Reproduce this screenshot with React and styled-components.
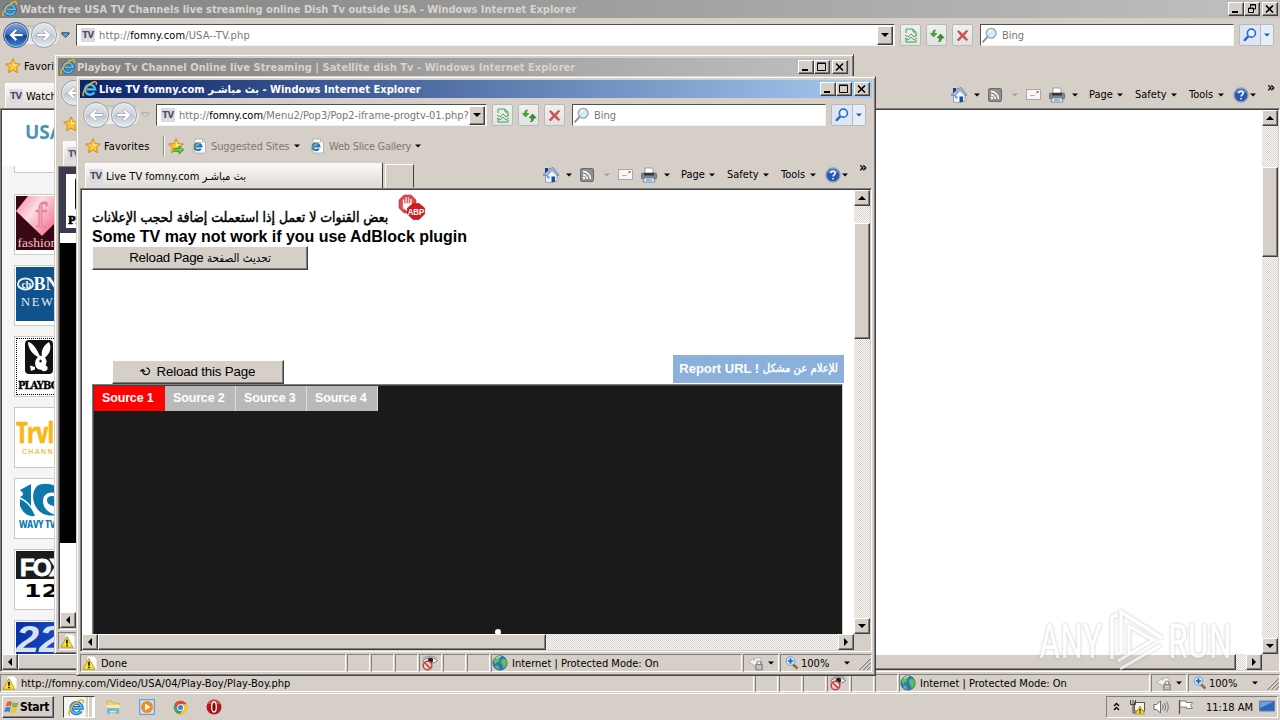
import React from 'react';
import styled, { createGlobalStyle, css } from 'styled-components';

const face = '#d5cfc7';
const ui = '"DejaVu Sans Condensed", "DejaVu Sans", sans-serif';

const GlobalStyle = createGlobalStyle`
  * { box-sizing: border-box; }
  body { margin: 0; overflow: hidden; }
  svg { display: block; flex: none; }
`;

const raised = css`
  background: ${face};
  border: 1px solid;
  border-color: #fff #404040 #404040 #fff;
  box-shadow: inset -1px -1px 0 #808080;
`;

const Desktop = styled.div`
  position: relative;
  width: 1280px;
  height: 720px;
  overflow: hidden;
  background: ${face};
  font: 11px/14px ${ui};
  font-stretch: condensed;
  color: #000;
  white-space: pre;
`;

/* ---------- window ---------- */

const WindowBox = styled.div`
  position: absolute;
  left: ${p => p.$x}px;
  top: ${p => p.$y}px;
  width: ${p => p.$w}px;
  height: ${p => p.$h}px;
  background: ${face};
  display: flex;
  flex-direction: column;
  ${p => !p.$maximized && css`
    padding: 3px;
    border: 1px solid;
    border-color: ${face} #404040 #404040 ${face};
    box-shadow: inset 1px 1px 0 #fff, inset -1px -1px 0 #808080;
  `}
`;

const TitleBar = styled.div`
  height: 18px;
  flex: none;
  display: flex;
  align-items: center;
  padding: 0 2px;
  background: ${p => p.$active
    ? 'linear-gradient(90deg, #0a246a, #a6caf0)'
    : 'linear-gradient(90deg, #808080, #c0c0c0)'};
  color: ${p => p.$active ? '#fff' : '#d8d4cc'};
`;

const TitleText = styled.div`
  flex: 1;
  font-weight: bold;
  margin-left: ${p => p.$ml}px;
  padding-top: 2px;
  letter-spacing: ${p => p.$track || 0}px;
  overflow: hidden;
`;

const CaptionButton = styled.div`
  ${raised}
  width: 16px;
  height: 14px;
  margin-left: ${p => p.$gap ? 2 : 0}px;
  display: flex;
  align-items: center;
  justify-content: center;
`;

const NavRow = styled.div`
  height: 34px;
  flex: none;
  display: flex;
  align-items: center;
  padding: 0 6px 0 3px;
`;

const Field = styled.div`
  height: 22px;
  flex: ${p => p.$w ? 'none' : 1};
  width: ${p => p.$w ? p.$w + 'px' : 'auto'};
  display: flex;
  align-items: center;
  background: #fff;
  border: 1px solid;
  border-color: #505050 #f4f2ee #f4f2ee #505050;
  color: #777;
  overflow: hidden;
  margin-left: ${p => p.$ml || 0}px;
`;

const FieldText = styled.div`
  flex: 1;
  overflow: hidden;
  padding-top: 2px;
  letter-spacing: ${p => p.$track || 0}px;
  margin-left: ${p => p.$ml}px;
  b { color: #000; font-weight: normal; }
`;

const DropButton = styled.div`
  ${raised}
  width: 16px;
  height: 19px;
  margin-right: 1px;
  display: flex;
  align-items: center;
  justify-content: center;
`;

const ToolButton = styled.div`
  width: 21px;
  height: 22px;
  margin-left: 5px;
  display: flex;
  align-items: center;
  justify-content: center;
  border: 1px solid #b4bac4;
  border-radius: 2px;
  background: linear-gradient(#f1f0ee, #e2e2e3);
`;

const SearchButton = styled(ToolButton)`
  width: 35px;
  justify-content: space-around;
  background: linear-gradient(90deg, #dfe6f1 20px, #b4bac4 20px, #b4bac4 21px, #e6edf6 21px);
`;

const Round = styled.div`
  width: 26px;
  height: 26px;
  border-radius: 50%;
  margin-right: 2px;
  border: 1px solid ${p => p.$on ? '#40587e' : '#979da2'};
  box-shadow: inset 0 0 0 1px ${p => p.$on ? '#b9d2f2' : '#f3f6f8'};
  background: ${p => p.$on
    ? 'linear-gradient(#7da3d8, #3e6cbc 48%, #16408f 52%, #3d86dc)'
    : 'linear-gradient(#e4e7eb, #ced5db 48%, #bcc7d1 52%, #e3eef4)'};
  display: flex;
  align-items: center;
  justify-content: center;
`;

const RoundPair = styled.div`
  display: flex;
  margin-right: 2px;
  border-radius: 13px;
  background: linear-gradient(transparent 3px, #bdb8b1 3px, #e2dfda 8px, #f0eeeb 22px, transparent 22px);
`;

const FavRow = styled.div`
  height: 28px;
  flex: none;
  display: flex;
  align-items: center;
  padding-left: 5px;
  color: #7c7a76;
`;

const FavText = styled.div`
  width: ${p => p.$w}px;
  color: ${p => p.$dark ? '#000' : 'inherit'};
  letter-spacing: ${p => p.$track || 0}px;
  margin: 0 4px 0 ${p => p.$ml || 0}px;
  padding-top: 2px;
`;

const FavDivider = styled.div`
  width: 2px;
  height: 20px;
  border-left: 1px solid #8c8983;
  border-right: 1px solid #fff;
  margin: 0 3px 0 9px;
`;

const TabRow = styled.div`
  height: 28px;
  flex: none;
  display: flex;
  padding: 3px 4px 0 5px;
`;

const Tab = styled.div`
  width: ${p => p.$w}px;
  height: 25px;
  display: flex;
  align-items: center;
  padding-left: 3px;
  background: linear-gradient(#fbfaf9, #dedad4);
  border-left: 1px solid #fff;
  border-right: 1px solid #404040;
  overflow: hidden;
`;

const NewTab = styled.div`
  width: 29px;
  height: 24px;
  margin: 1px 0 0 2px;
  border: 1px solid;
  border-color: #fff #404040 transparent #fff;
`;

const TabLabel = styled.div`
  margin-left: 3px;
  padding-top: 2px;
`;

const CommandBar = styled.div`
  margin-left: auto;
  display: flex;
  align-items: center;
  height: 23px;
`;

const Cmd = styled.div`
  flex: none;
  margin-left: ${p => p.$ml || 0}px;
  width: ${p => p.$w}px;
  align-self: ${p => p.$top ? 'flex-start' : 'center'};
  font-size: ${p => p.$top ? 14 : 11}px;
  font-weight: ${p => p.$top ? 'bold' : 'normal'};
  line-height: ${p => p.$top ? 8 : 14}px;
`;

const TvBox = styled.div`
  width: 14px;
  height: 14px;
  flex: none;
  margin-left: ${p => p.$ml || 0}px;
  background: #dbdadf;
  color: #4d4d62;
  font-weight: bold;
  font-size: 9.500px;
  line-height: 14px;
  letter-spacing: -0.4px;
  text-align: center;
`;

const Frame = styled.div`
  flex: 1;
  min-height: 0;
  display: grid;
  grid-template-columns: 1fr 16px;
  grid-template-rows: 1fr 16px;
  border: 1px solid;
  border-color: #808080 #fff #fff #808080;
  box-shadow: inset 1px 1px 0 #404040;
  padding: 1px;
`;

const Page = styled.div`
  min-width: 0;
  min-height: 0;
  overflow: hidden;
  background: #fff;
`;

const Track = styled.div`
  display: flex;
  flex-direction: ${p => p.$vertical ? 'column' : 'row'};
  background: repeating-conic-gradient(#fff 0 25%, ${face} 0 50%) 0 0 / 2px 2px;
`;

const ScrollButton = styled.div`
  ${raised}
  width: 16px;
  height: 16px;
  flex: none;
  display: flex;
  align-items: center;
  justify-content: center;
`;

const Thumb = styled.div`
  ${raised}
  flex: none;
  ${p => p.$vertical ? `height: ${p.$size}px; margin-top: ${p.$at}px;` : `width: ${p.$size}px; margin-left: ${p.$at}px;`}
  & + * { margin-${p => p.$vertical ? 'top' : 'left'}: auto; }
`;

const StatusBar = styled.div`
  height: 20px;
  flex: none;
  display: flex;
  gap: 1px;
  padding-top: 2px;
`;

const Cell = styled.div`
  height: 18px;
  flex: ${p => p.$w ? 'none' : 1};
  width: ${p => p.$w ? p.$w + 'px' : 'auto'};
  border: 1px solid;
  border-color: #85827d #fff #fff #85827d;
  display: flex;
  align-items: center;
  padding-left: ${p => p.$pad || 0}px;
  gap: ${p => p.$gap || 0}px;
  overflow: hidden;
`;

const CellText = styled.div`
  padding-top: 2px;
  width: ${p => p.$w ? p.$w + 'px' : 'auto'};
  letter-spacing: ${p => p.$track || 0}px;
`;

/* ---------- icons ---------- */

const Arrow = ({ color = '#000', dir = 'down', size = 6 }) => {
  const turn = { down: 0, up: 180, left: 90, right: -90 }[dir];
  return (
    <svg width={size} height={size} viewBox="0 0 8 8">
      <path d="M0 2h8L4 6z" fill={color} transform={`rotate(${turn} 4 4)`} />
    </svg>
  );
};

const IeIcon = ({ size = 16 }) => (
  <svg width={size} height={size} viewBox="0 0 16 16">
    <path d="M12.3 11.2A5 5 0 1 1 13 8.4H4.6" fill="none" stroke="#1464b4" strokeWidth="3.400" />
    <path d="M12.3 11.2A5 5 0 1 1 13 8.4H4.6" fill="none" stroke="#5cc0f4" strokeWidth="1.700" />
    <path d="M1.8 15.2C-.8 13 3.500 5.600 9.500 2c4-2.300 6-1.200 4.500 1.800" fill="none" stroke="#e9b320" strokeWidth="1.500" />
  </svg>
);

const Star = ({ size = 16, add }) => (
  <svg width={size} height={size} viewBox="0 0 16 16">
    <path d="M8 .8l2.200 4.800 5.200.5-3.900 3.500 1.200 5.200L8 12.100l-4.700 2.700 1.200-5.200L.6 6.100l5.200-.5z" fill="#fdc52e" stroke="#cd8310" strokeWidth=".9" />
    <path d="M8 3l1.300 3.300 3.200.5-4.500 2z" fill="#fff0a8" />
    {add && <path d="M6 10.500h5V8l4.700 3.900L11 15.700v-2.500H6z" fill="#6fd04c" stroke="#218a1d" strokeWidth=".8" />}
  </svg>
);

const IePage = () => (
  <svg width="14" height="16" viewBox="0 0 14 16">
    <path d="M3 1h7.500L13.500 4v11H3z" fill="#fff" stroke="#a5a9ae" strokeWidth=".8" />
    <path d="M10.500 1v3h3" fill="none" stroke="#a5a9ae" strokeWidth=".8" />
    <path d="M8.800 10.700A3.400 3.400 0 1 1 9.400 8.400H3" fill="none" stroke="#1d78c8" strokeWidth="2.200" />
    <path d="M.8 13.500C-.2 11 4 6.200 9.800 3.900" fill="none" stroke="#e3b33a" />
  </svg>
);

const NavArrow = ({ flip, on }) => (
  <svg width="18" height="18" viewBox="0 0 18 18">
    <path d="M2 9l6.500-6.200 2 1.900L7.700 7.500H16v3H7.700l2.800 2.800-2 1.900z" fill="#fff" stroke={on ? '#2a56a0' : '#98a6b4'} strokeWidth=".8" transform={flip ? 'matrix(-1 0 0 1 18 0)' : undefined} />
  </svg>
);

const RecentArrow = ({ on }) => (
  <svg width="9" height="6" viewBox="0 0 9 6">
    <path d="M.8 .8h7.400v1L4.500 5.300.8 1.800z" fill={on ? '#5aa0d8' : '#d8d4cd'} stroke={on ? '#143a5c' : '#aaa69f'} strokeWidth=".9" />
  </svg>
);

const Compat = () => (
  <svg width="14" height="15" viewBox="0 0 14 15">
    <path d="M2 5V1h7l3 3v4M2 10v4h10v-2M9 1v3h3" fill="none" stroke="#49a34f" />
    <path d="M1 7l3 2 3-3 3 3 3-2M1 10l3 2 3-3 3 3 3-2" fill="none" stroke="#3b9f45" strokeWidth=".9" />
  </svg>
);

const Refresh = () => (
  <svg width="16" height="15" viewBox="0 0 16 15">
    <path d="M6.800 2C4.800 1.500 3.500 3 3.600 5.500H1.200l3.400 3.600L8 5.500H5.500c0-1.500.3-2.500 1.300-3.500z" fill="#48a82f" stroke="#227b18" strokeWidth=".5" />
    <path d="M9.300 13.700c2.200.2 3.500-1.300 3.400-3.700h2.500L11.600 6 8 10h2.700c.1 1.500-.2 2.700-1.400 3.700z" fill="#339328" stroke="#206b18" strokeWidth=".5" />
  </svg>
);

const Stop = () => (
  <svg width="13" height="13" viewBox="0 0 13 13">
    <path d="M1.500 2.500l1-1 4 3.600 4.200-3.900 1 1L8 6.600l3.700 4-1.200 1.200-4-3.700-4 3.900-1.200-1.200L5 6.700z" fill="#dc5454" stroke="#a92d30" strokeWidth=".6" />
  </svg>
);

const Lens = ({ blue, size = 15 }) => (
  <svg width={size} height={size} viewBox="0 0 15 15">
    <path d="M5.800 8.700L1.800 13" stroke={blue ? '#2d62d0' : '#8c9499'} strokeWidth={blue ? 2.500 : 1.700} strokeLinecap="round" />
    <circle cx="9" cy="5.500" r="4.300" fill={blue ? '#e6f3ff' : '#d3ecf8'} stroke={blue ? '#2c6ae0' : '#98a6ae'} strokeWidth={blue ? 1.800 : 1.200} />
    <path d="M6.700 5A2.500 2.500 0 0 1 9 2.800" fill="none" stroke="#fff" />
  </svg>
);

const Home = () => (
  <svg width="16" height="16" viewBox="0 0 16 16">
    <path d="M2.500 7v8l5 .7L14 14V7L9 2z" fill="#f2f6fc" stroke="#7589aa" strokeWidth=".7" />
    <path d="M0 8L6 2l4-1.500L16 8l-1.500 1L9 3.500 4 9z" fill="#a8bcdc" stroke="#44618f" strokeWidth=".6" />
    <path d="M2 1h3v3L2 6z" fill="#1e3c9c" />
    <path d="M8.500 9.500H12v5.300l-3.500.7z" fill="#1f4e99" />
    <path d="M4 9h2.500v2.500H4z" fill="#79a3d6" />
  </svg>
);

const Rss = () => (
  <svg width="14" height="14" viewBox="0 0 14 14">
    <rect x=".5" y=".5" width="13" height="13" rx="1.500" fill="#8f8f8f" stroke="#6c6c6c" />
    <path d="M3 3.500a7.500 7.500 0 0 1 7.500 7.500M3 6.800A4.200 4.200 0 0 1 7.200 11" fill="none" stroke="#fff" strokeWidth="1.500" />
    <circle cx="4" cy="10" r="1.300" fill="#fff" />
  </svg>
);

const Mail = () => (
  <svg width="15" height="11" viewBox="0 0 15 11">
    <rect x=".5" y=".5" width="14" height="10" fill="#f7f6f5" stroke="#a9a7a9" />
    <path d="M10.500 2h2v2h-2z" fill="#c75d72" />
    <path d="M4 6.500h5" stroke="#b4b2b8" />
  </svg>
);

const Printer = () => (
  <svg width="16" height="16" viewBox="0 0 16 16">
    <path d="M4 1h7l1 1v5H4z" fill="#fff" stroke="#7a8088" strokeWidth=".7" />
    <rect x=".5" y="6" width="15" height="6" rx="1" fill="#83878d" stroke="#5d6066" strokeWidth=".7" />
    <rect x="3" y="6" width="10" height="2.500" fill="#34373c" />
    <path d="M3 11h10l1 4H2z" fill="#dfeefa" stroke="#56738e" strokeWidth=".7" />
    <path d="M5 13h6" stroke="#3586c2" />
  </svg>
);

const Help = () => (
  <svg width="16" height="16" viewBox="0 0 16 16">
    <circle cx="8" cy="8" r="7" fill="#2b57ae" stroke="#8a9dc0" strokeWidth="1.300" />
    <path d="M2.500 6a5.800 5.800 0 0 1 11 0z" fill="#6f95d8" opacity=".7" />
    <path d="M5.800 6.200c0-2.600 4.500-2.600 4.500-.2 0 1.700-2.200 1.700-2.200 3.600M8.100 11v1.600" fill="none" stroke="#fff" strokeWidth="1.500" />
  </svg>
);

const WarnPage = () => (
  <svg width="16" height="16" viewBox="0 0 16 16">
    <path d="M5 1h7l3 3v11H5z" fill="#fff" stroke="#c2c2c2" strokeWidth=".7" />
    <path d="M7 3.500L13 14.300H1z" fill="#fbe132" stroke="#a5900f" strokeWidth=".8" strokeLinejoin="round" />
    <path d="M7 6.800v4M7 11.700v1.500" stroke="#000" strokeWidth="1.500" />
  </svg>
);

const Eye = () => (
  <svg width="18" height="16" viewBox="0 0 18 16">
    <path d="M1.500 6C5 2.500 12 1.800 16.500 5.500 12 9.500 5 9.500 1.500 6z" fill="#fff" stroke="#666" strokeWidth=".9" />
    <path d="M2 3.500C6 .5 12 .5 16 3" fill="none" stroke="#888" strokeWidth=".8" />
    <circle cx="9.500" cy="5.300" r="2.600" fill="#222" />
    <circle cx="6.500" cy="10.500" r="4.300" fill="#f0d0cc" stroke="#c2453f" strokeWidth="1.500" />
    <path d="M3.700 7.700l5.700 5.700" stroke="#c2453f" strokeWidth="1.500" />
  </svg>
);

const Globe = () => (
  <svg width="16" height="16" viewBox="0 0 16 16">
    <circle cx="8" cy="8" r="7.200" fill="#2c75c9" stroke="#2b5b8c" strokeWidth=".7" />
    <path d="M3 3c2-2.500 4.500-2 5-1 .7 1.500-1.500 2.200-1 3.800.5 1-3 1.400-3.300 3.200C2 9 1 6 3 3zM10 4.500c2-1.500 3.500-.5 4.500 1.500.8 2.500-.2 5.500-2.500 7-1.500 0-.6-2.700-2-3.800-1.400-1-1.500-3.500 0-4.700zM4 10.500c2-.5 3.500 1.500 3.300 4C5.500 14 4 13 3 11.500z" fill="#5ec349" />
    <path d="M4 3.500a6 6 0 0 1 5-2" fill="none" stroke="#c8eaff" />
  </svg>
);

const LockIcon = () => (
  <svg width="17" height="15" viewBox="0 0 17 15">
    <path d="M1 6.500L6 2v2.500c1-2.500 4-3.500 7-2v5L6 11V9z" fill="#f3f2f0" stroke="#a9a8a6" strokeWidth=".8" />
    <path d="M9 8.500V7a2 2 0 0 1 4 0v1.500" fill="none" stroke="#8a8987" strokeWidth="1.200" />
    <rect x="7.700" y="8.500" width="6.600" height="5.500" fill="#a9a8a6" stroke="#7b7a78" strokeWidth=".7" />
    <path d="M9 10.400h4M9 12.200h4" stroke="#e4e4e4" strokeWidth=".8" />
  </svg>
);

const ZoomIcon = () => (
  <svg width="14" height="14" viewBox="0 0 14 14">
    <path d="M8 8.500l4.500 4" stroke="#8f6b3b" strokeWidth="2.400" />
    <circle cx="5.500" cy="5" r="4.300" fill="#d5ebff" stroke="#6d9fd8" />
    <path d="M5.500 2.300v5.400M2.800 5h5.400" stroke="#1e5fc4" strokeWidth="1.700" />
  </svg>
);

const Grip = () => (
  <svg width="13" height="13" viewBox="0 0 13 13">
    <path d="M1 13L13 1M5 13l8-8M9 13l4-4" stroke="#8a8780" strokeWidth="1.500" />
    <path d="M0 13L13 0M4 13l9-9M8 13l5-5" stroke="#fff" strokeWidth=".6" />
  </svg>
);

const CaptionGlyph = ({ kind }) => (
  <svg width="10" height="10" viewBox="0 0 10 10">
    {kind === 'min' && <path d="M1 8h6" stroke="#000" strokeWidth="2" />}
    {kind === 'max' && <path d="M.5 1.500h8v7h-8zM0 1h9" fill="none" stroke="#000" />}
    {kind === 'restore' && <path d="M3.500 3.500v-3h5v4.500H6.500M3 1h6M1.500 4h5v4.500h-5zM1 4.500h6" fill="none" stroke="#000" />}
    {kind === 'close' && <path d="M1 1.500l7 7M8 1.500l-7 7" stroke="#000" strokeWidth="1.600" />}
  </svg>
);

/* ---------- browser ---------- */

const TvBadge = ({ ml }) => <TvBox $ml={ml}>TV</TvBox>;

const Browser = ({ x, y, w, h, maximized, active, title, titleTrack, path, pathTrack, tab, tabWidth, status, statusTrack, vThumb, hThumb, children }) => (
  <WindowBox $x={x} $y={y} $w={w} $h={h} $maximized={maximized}>
    <TitleBar $active={active}>
      <IeIcon />
      <TitleText $ml={maximized ? 2 : 1} $track={titleTrack}>{title}</TitleText>
      <CaptionButton><CaptionGlyph kind="min" /></CaptionButton>
      <CaptionButton><CaptionGlyph kind={maximized ? 'restore' : 'max'} /></CaptionButton>
      <CaptionButton $gap><CaptionGlyph kind="close" /></CaptionButton>
    </TitleBar>
    <NavRow>
      <RoundPair>
        <Round $on={maximized}><NavArrow on={maximized} /></Round>
        <Round><NavArrow flip /></Round>
      </RoundPair>
      <RecentArrow on={maximized} />
      <Field $ml={6}>
        <TvBadge ml={4} />
        <FieldText $ml={4} $track={pathTrack}>http://<b>fomny.com</b>{path}</FieldText>
        <DropButton><Arrow size={8} /></DropButton>
      </Field>
      <ToolButton><Compat /></ToolButton>
      <ToolButton><Refresh /></ToolButton>
      <ToolButton><Stop /></ToolButton>
      <Field $w={254} $ml={7}>
        <Lens size={17} />
        <FieldText $ml={4}>Bing</FieldText>
      </Field>
      <SearchButton><Lens blue size={14} /><Arrow color="#2a59b8" /></SearchButton>
    </NavRow>
    <FavRow>
      <Star />
      <FavText $dark $w={46} $ml={3} $track={0.1}>Favorites</FavText>
      <FavDivider />
      <Star add />
      <FavText $w={0} $ml={4} />
      <IePage />
      <FavText $w={79} $ml={5} $track={-0.1}>Suggested Sites</FavText>
      <Arrow />
      <FavText $w={0} $ml={6} />
      <IePage />
      <FavText $w={82} $ml={5} $track={-0.25}>Web Slice Gallery</FavText>
      <Arrow />
    </FavRow>
    <TabRow>
      <Tab $w={tabWidth}>
        <TvBadge />
        <TabLabel>{tab}</TabLabel>
      </Tab>
      <NewTab />
      <CommandBar>
        <Cmd $w={16}><Home /></Cmd>
        <Cmd $w={7} $ml={7}><Arrow /></Cmd>
        <Cmd $w={14} $ml={7}><Rss /></Cmd>
        <Cmd $w={7} $ml={10}><Arrow color="#a5a19b" /></Cmd>
        <Cmd $w={15} $ml={7}><Mail /></Cmd>
        <Cmd $w={16} $ml={8}><Printer /></Cmd>
        <Cmd $w={7} $ml={7}><Arrow /></Cmd>
        <Cmd $w={26} $ml={10}>Page</Cmd>
        <Cmd $w={7} $ml={2}><Arrow /></Cmd>
        <Cmd $w={33} $ml={11}>Safety</Cmd>
        <Cmd $w={7} $ml={3}><Arrow /></Cmd>
        <Cmd $w={27} $ml={11}>Tools</Cmd>
        <Cmd $w={7} $ml={2}><Arrow /></Cmd>
        <Cmd $w={16} $ml={8}><Help /></Cmd>
        <Cmd $w={7} $ml={1}><Arrow /></Cmd>
        <Cmd $w={9} $ml={10} $top>»</Cmd>
      </CommandBar>
    </TabRow>
    <Frame>
      <Page>{children}</Page>
      <Track $vertical>
        <ScrollButton><Arrow dir="up" size={8} /></ScrollButton>
        <Thumb $vertical $at={vThumb[0]} $size={vThumb[1]} />
        <ScrollButton><Arrow dir="down" size={8} /></ScrollButton>
      </Track>
      <Track>
        <ScrollButton><Arrow dir="left" size={8} /></ScrollButton>
        <Thumb $at={hThumb[0]} $size={hThumb[1]} />
        <ScrollButton><Arrow dir="right" size={8} /></ScrollButton>
      </Track>
    </Frame>
    <StatusBar>
      <Cell $pad={1} $gap={3}><WarnPage /><CellText $track={statusTrack}>{status}</CellText></Cell>
      <Cell $w={23} />
      <Cell $w={23} />
      <Cell $w={23} />
      <Cell $w={23} $pad={1}><Eye /></Cell>
      <Cell $w={23} />
      <Cell $w={23} />
      <Cell $w={251} $pad={0} $gap={4}><Globe /><CellText>Internet | Protected Mode: On</CellText></Cell>
      <Cell $w={36} $pad={4} $gap={3}><LockIcon /><Arrow /></Cell>
      <Cell $w={92} $pad={4} $gap={2}>
        <ZoomIcon />
        <CellText $w={42}>100%</CellText>
        <Arrow />
        <CellText $w={4} />
        <Grip />
      </Cell>
    </StatusBar>
  </WindowBox>
);

/* ---------- channel list page ---------- */

const SideHead = styled.div`
  height: 56px;
  padding: 8px 0 0 23px;
  font: bold 19px/28px "Open Sans", sans-serif;
  color: #4794b7;
`;

const SideList = styled.div`
  width: 300px;
  height: 500px;
  background: #f5f5f5;
  padding-left: 12px;
`;

const SideBlank = styled.div`
  height: 7px;
  background: #fff;
  border: 1px solid #c9c9c9;
  border-top: 0;
  margin-bottom: 21px;
`;

const Card = styled.div`
  width: 160px;
  height: 61px;
  margin-bottom: 10px;
  padding: 1px;
  background: #fff;
  border: 1px solid #c9c9c9;
`;

const LogoBox = styled.div`
  width: 120px;
  height: ${p => p.$focus ? 57 : 54}px;
  overflow: hidden;
  background: ${p => p.$bg || '#fff'};
  ${p => p.$focus && 'border: 1px dotted #000;'}
`;

const Bunny = () => (
  <svg width="28" height="34" viewBox="0 0 28 34">
    <rect width="28" height="34" rx="4" fill="#111" />
    <path d="M13 17C7 14 3 8 3 2c5 1 9 7 11.500 13.500L17 16c-1-5 1-10.500 7-14 3 5 1 12-4 15.500 2 2.500 2 5 .5 8 2 .6 3 2.500 1.500 4.500-2 2-4.500 1.500-5.500-.3-2.500.3-5-.7-6-3.700-1-4 0-7 2.500-9z" fill="#fff" />
    <ellipse cx="15.500" cy="21" rx="1.200" ry="1.600" fill="#111" />
    <path d="M10 27l-5-1.500L6 31l4-1.500z" fill="#fff" />
  </svg>
);

const ChannelPage = () => (
  <>
    <SideHead>USA</SideHead>
    <SideList>
      <SideBlank />
      <Card>
        <LogoBox $bg="#3a0812">
          <svg width="60" height="54" viewBox="0 0 60 54">
            <defs>
              <linearGradient id="gem" x1="0" y1="0" x2="1" y2="0.6">
                <stop offset="0" stopColor="#f7849f" />
                <stop offset=".4" stopColor="#fddbe3" />
                <stop offset="1" stopColor="#f0607f" />
              </linearGradient>
            </defs>
            <path d="M12 0h28l12 14-26 26L0 15z" fill="url(#gem)" />
            <text x="19" y="31" fontFamily="Liberation Serif" fontSize="36" fill="#f7a3b7" stroke="#d96c8a" strokeWidth=".7">f</text>
            <text x="1.500" y="50.500" fontFamily="Liberation Serif" fontSize="13.500" fill="#f9c3cd">fashion</text>
          </svg>
        </LogoBox>
      </Card>
      <Card>
        <LogoBox $bg="#10528c">
          <svg width="60" height="54" viewBox="0 0 60 54">
            <ellipse cx="9.500" cy="17" rx="7.500" ry="5.500" fill="none" stroke="#e8eef5" strokeWidth="2" />
            <text x="5.500" y="20.500" fontFamily="Liberation Serif" fontWeight="bold" fontSize="9.500" fill="#fff">cb</text>
            <text x="17.500" y="23" fontFamily="Liberation Serif" fontWeight="bold" fontSize="18" fill="#fff">BN</text>
            <text x="5" y="39" fontFamily="Liberation Serif" fontSize="12.500" letterSpacing="1.700" fill="#e5edf5">NEWS</text>
          </svg>
        </LogoBox>
      </Card>
      <Card>
        <LogoBox $focus>
          <svg width="60" height="57" viewBox="0 0 60 57">
            <svg x="8" y="1"><Bunny /></svg>
            <text x="1" y="50" fontFamily="DejaVu Serif" fontWeight="bold" fontSize="11" letterSpacing="-.9" stroke="#000" strokeWidth=".3">PLAYBOY</text>
          </svg>
        </LogoBox>
      </Card>
      <Card>
        <LogoBox>
          <svg width="60" height="54" viewBox="0 0 60 54">
            <text x="0" y="34" fontFamily="Open Sans" fontWeight="bold" fontSize="28" letterSpacing="-.9" fill="#fab812" stroke="#fab812" strokeWidth=".3">Trvl</text>
            <text x="6" y="44.500" fontFamily="Liberation Sans" fontWeight="bold" fontSize="7" letterSpacing="1.300" fill="#f2c04b">CHANNEL</text>
          </svg>
        </LogoBox>
      </Card>
      <Card>
        <LogoBox>
          <svg width="60" height="54" viewBox="0 0 60 54">
            <path d="M4 10L15 4v22C12 22 8 19 4 17l3-2V13zM4 19c7 3 12 9 15 17C12 37 7 33 4 26z" fill="#0e78ad" />
            <path d="M21 6C26 3 33 3 39 6v7c-7-2-12 2-12 8 0 7 5 12 13 14-8 2-16-1-20-8-4-7-4-16 1-21zM31 20c0-4 5-5 9-3v9c-5 0-9-2-9-6z" fill="#0e78ad" />
            <text x="3" y="48" fontFamily="Open Sans" fontWeight="bold" fontSize="11" letterSpacing="-.2" fill="#0e78ad">WAVY TV</text>
          </svg>
        </LogoBox>
      </Card>
      <Card>
        <LogoBox>
          <svg width="60" height="54" viewBox="0 0 60 54">
            <rect width="60" height="28" fill="#1c1c1c" />
            <text x="4" y="24.500" fontFamily="Liberation Sans" fontWeight="bold" fontSize="24" letterSpacing="-2" fill="#fff" stroke="#fff" strokeWidth=".9">FOX</text>
            <text x="8" y="45.500" fontFamily="DejaVu Sans" fontWeight="bold" fontSize="17" textLength="35" lengthAdjust="spacingAndGlyphs">12</text>
          </svg>
        </LogoBox>
      </Card>
      <Card>
        <LogoBox $bg="linear-gradient(90deg, #0a2fa8, #3a7fe0)">
          <svg width="60" height="54" viewBox="0 0 60 54">
            <text x="0" y="30" fontFamily="Liberation Sans" fontWeight="bold" fontStyle="italic" fontSize="36" textLength="46" lengthAdjust="spacingAndGlyphs" fill="#d8e2f0">22</text>
          </svg>
        </LogoBox>
      </Card>
    </SideList>
  </>
);

/* ---------- player pages ---------- */

const PlayboyHead = styled.div`
  height: 65px;
  background: #3b3850;
  padding: 6px;
`;

const PlayboyLogo = styled.div`
  width: 70px;
  height: 54px;
  background: #fff;
  padding-left: 2px;
`;

const BlackPlayer = styled.div`
  height: 300px;
  margin-top: 10px;
  background: #000;
`;

const PlayboyPage = () => (
  <>
    <PlayboyHead>
      <PlayboyLogo>
        <svg width="60" height="54" viewBox="0 0 60 54">
          <svg x="7" y="3"><Bunny /></svg>
          <text x="0" y="50" fontFamily="DejaVu Serif" fontWeight="bold" fontSize="11" stroke="#000" strokeWidth=".6">PLAYBOY</text>
        </svg>
      </PlayboyLogo>
    </PlayboyHead>
    <BlackPlayer />
  </>
);

const LivePage = styled.div`
  font-family: "Liberation Sans", sans-serif;
  padding-left: 10px;
`;

const NoticeRow = styled.div`
  display: flex;
  align-items: flex-end;
  height: 37px;
  svg { margin: 0 0 5px 8px; }
`;

const Arabic = styled.span`
  display: inline-block;
  font-family: "DejaVu Sans Condensed", "DejaVu Sans", sans-serif;
  font-stretch: condensed;
  font-weight: normal;
  -webkit-text-stroke: ${p => p.$heavy || 0}px currentColor;
  font-size: ${p => p.$size}px;
  letter-spacing: 0;
  line-height: 18px;
  margin-bottom: ${p => p.$lift || 0}px;
  width: ${p => p.$w ? p.$w + 'px' : 'auto'};
`;

const Notice = styled.div`
  font-weight: bold;
  font-size: 16px;
  line-height: 20px;
  letter-spacing: -0.030px;
  margin-bottom: -1px;
`;

const WinButton = styled.div`
  ${raised}
  width: ${p => p.$w}px;
  height: 24px;
  margin-left: ${p => p.$ml || 0}px;
  padding-bottom: 1px;
  display: flex;
  align-items: center;
  justify-content: center;
  font-size: 13.330px;
  letter-spacing: ${p => p.$track || 0}px;
`;

const ControlRow = styled.div`
  width: 752px;
  height: 29px;
  margin-top: 85px;
  display: flex;
  justify-content: space-between;
  align-items: flex-end;
`;

const Report = styled.div`
  width: 171px;
  height: 28px;
  margin-bottom: 1px;
  background: #8bb0da;
  color: #fff;
  font-weight: bold;
  font-size: 13px;
  display: flex;
  align-items: center;
  justify-content: center;
`;

const Player = styled.div`
  position: relative;
  width: 751px;
  height: 260px;
  background: #1a1a1a;
  border: 1px solid;
  border-color: #808080 #d5cfc7 #d5cfc7 #808080;
  box-shadow: inset 1px 1px 0 #404040;
  padding: 1px;
  display: flex;
  align-items: flex-start;
`;

const Source = styled.div`
  width: 71px;
  height: 25px;
  background: ${p => p.$on ? '#f00' : '#b9b9b9'};
  border-right: 1px solid ${p => p.$on ? '#f00' : '#dcdcdc'};
  color: #fff;
  font-weight: bold;
  font-size: 12.500px;
  letter-spacing: -0.150px;
  line-height: 25px;
  padding-left: 8px;
`;

const Spinner = styled.div`
  position: absolute;
  left: 402px;
  top: 244px;
  width: 6px;
  height: 6px;
  border-radius: 50%;
  background: #fff;
`;

const AbpIcon = () => (
  <svg width="28" height="28" viewBox="0 0 28 28">
    <path d="M6 1h7l5 5v8l-5 5H6l-5-5V6z" fill="#dc4a4a" stroke="#b33" strokeWidth=".6" />
    <path d="M5.500 11V5.500M8 10V3.500M10.500 10V3.500M13 11V5M5.500 10h8v4l-3 3-5-3z" stroke="#fff" strokeWidth="1.300" fill="#fff" />
    <path d="M8 10V4M10.500 10V4" stroke="#dc4a4a" strokeWidth=".3" />
    <path d="M15 9.500h6l5.500 4.500v6L21 25.500h-6L9.500 20v-6z" fill="#d01c1c" stroke="#a81616" strokeWidth=".7" />
    <text x="9.700" y="20.500" fontFamily="Liberation Sans" fontWeight="bold" fontSize="8.500" fill="#fff" textLength="16.500" lengthAdjust="spacingAndGlyphs">ABP</text>
  </svg>
);

const ReloadGlyph = styled.span`
  font: 13px/14px "DejaVu Sans", sans-serif;
  margin-right: 5px;
  transform: rotate(-40deg);
`;

const sources = ['Source 1', 'Source 2', 'Source 3', 'Source 4'];

const LiveTvPage = () => (
  <LivePage>
    <NoticeRow>
      <Arabic $heavy={0.45} $size={13.9} $w={298} $lift={1}>بعض القنوات لا تعمل إذا استعملت إضافة لحجب الإعلانات</Arabic>
      <AbpIcon />
    </NoticeRow>
    <Notice>Some TV may not work if you use AdBlock plugin</Notice>
    <WinButton $w={216} $track={-0.25}>Reload Page <Arabic $size={11.5}>تحديث الصفحة</Arabic></WinButton>
    <ControlRow>
      <WinButton $w={172} $ml={20} $track={-0.18}><ReloadGlyph>↻</ReloadGlyph>Reload this Page</WinButton>
      <Report>Report URL ! <Arabic $heavy={0.4} $size={11.2}>للإعلام عن مشكل</Arabic></Report>
    </ControlRow>
    <Player>
      {sources.map((name, i) => <Source key={name} $on={i === 0}>{name}</Source>)}
      <Spinner />
    </Player>
  </LivePage>
);

/* ---------- taskbar ---------- */

const Taskbar = styled.div`
  position: absolute;
  left: 0;
  right: 0;
  bottom: 0;
  height: 28px;
  padding: 2px 2px 0;
  display: flex;
  align-items: center;
  background: ${face};
  box-shadow: inset 0 1px 0 ${face}, inset 0 2px 0 #fff;
`;

const StartButton = styled.div`
  ${raised}
  width: 52px;
  height: 22px;
  padding-left: 1px;
  display: flex;
  align-items: center;
  font-weight: bold;
  font-size: 12px;
  letter-spacing: -0.35px;
`;

const RunningTask = styled.div`
  width: 32px;
  height: 22px;
  margin-left: 9px;
  padding-left: 4px;
  display: flex;
  align-items: center;
  border: 1px solid;
  border-color: #404040 #fff #fff #404040;
  background: linear-gradient(90deg, #f7f5f2 22px, ${face} 22px, ${face} 24px, #fff 24px, #fff 25px, ${face} 25px, ${face} 28px, #fff 28px);
`;

const TaskIcon = styled.div`
  width: 16px;
  margin-left: ${p => p.$ml}px;
`;

const Tray = styled.div`
  margin-left: auto;
  width: 172px;
  height: 22px;
  border: 1px solid;
  border-color: #808080 #fff #fff #808080;
  display: flex;
  align-items: center;
  padding-left: 6px;
`;

const Clock = styled.div`
  width: 48px;
  margin: 0 5px 0 13px;
  padding-top: 2px;
`;

const StartFlag = () => (
  <svg width="16" height="15" viewBox="0 0 16 15">
    <path d="M3 2c2-1.200 3.500-1 5 0L7 6.500C5.500 5.500 4 5.300 1.700 6.500z" fill="#e8602c" />
    <path d="M9 2.300c2 1 3.500 1 5.500 0L13 7c-2 1-3.500.8-5.200-.2z" fill="#7dba3c" />
    <path d="M1.400 7.600c2-1 3.700-.9 5.300 0l-1.200 4.700c-1.700-1-3.200-1-5.300 0z" fill="#3f82d8" />
    <path d="M7.500 8c2 1 3.500 1 5.300 0l-1.300 4.700c-2 1-3.500.9-5.200 0z" fill="#f6c32c" />
  </svg>
);

const Folder = () => (
  <svg width="16" height="16" viewBox="0 0 16 16">
    <path d="M2 2h5l1 2h6v9H2z" fill="#ecd278" stroke="#c5a54c" strokeWidth=".7" />
    <path d="M1 6h14l-1 7H2z" fill="#f8eaa6" />
    <path d="M2 9h12v6h-3v-3H5v3H2z" fill="#6cbbe4" />
  </svg>
);

const MediaPlayer = () => (
  <svg width="16" height="16" viewBox="0 0 16 16">
    <rect x=".7" y=".7" width="14.600" height="14.600" fill="#cfe4f5" stroke="#4c93d4" />
    <circle cx="8" cy="8" r="6" fill="#f38a1c" />
    <path d="M6 4.500v7L11.500 8z" fill="#fff" />
  </svg>
);

const ChromeIcon = () => (
  <svg width="15" height="15" viewBox="0 0 16 16">
    <circle cx="8" cy="8" r="7.300" fill="#3aa757" />
    <path d="M1.700 4.300A7.300 7.300 0 0 1 14.400 4.500H8L5 9.700z" fill="#e2453a" />
    <path d="M14.400 4.500A7.300 7.300 0 0 1 7.500 15.300L11 9.700 8 4.500z" fill="#fbc52d" />
    <circle cx="8" cy="8" r="3.600" fill="#fff" />
    <circle cx="8" cy="8" r="2.700" fill="#3f7fe5" />
  </svg>
);

const OperaIcon = () => (
  <svg width="16" height="16" viewBox="0 0 16 16">
    <circle cx="8" cy="8" r="7.500" fill="#b5141b" />
    <path d="M1.500 5a7 7 0 0 1 13 0z" fill="#e65a58" opacity=".7" />
    <ellipse cx="8" cy="8" rx="2.300" ry="5" fill="#7c0c11" stroke="#fff" strokeWidth="1.300" />
  </svg>
);

const Chevrons = () => (
  <svg width="7" height="10" viewBox="0 0 7 10">
    <path d="M1 4l2.500-2.500L6 4M1 8l2.500-2.500L6 8" fill="none" stroke="#000" strokeWidth="1.300" />
  </svg>
);

const NetworkIcon = () => (
  <svg width="17" height="16" viewBox="0 0 17 16">
    <rect x="5.500" y="3.500" width="10" height="8.500" fill="#f4f4f4" stroke="#555" />
    <path d="M1.500 1v4.500h5V1M4 1v4M4 5.500V14h4" fill="none" stroke="#444" />
    <path d="M11 7l4.500 8h-9z" fill="#f9da2a" stroke="#a88c0c" strokeWidth=".7" />
    <path d="M11 9.700v2.800M11 13.200v1" stroke="#000" strokeWidth="1.200" />
  </svg>
);

const SpeakerIcon = () => (
  <svg width="17" height="16" viewBox="0 0 17 16">
    <path d="M1 5.500h2.500L7.500 2v12l-4-3.500H1z" fill="#fff" stroke="#5c5c5c" strokeWidth=".9" />
    <path d="M9.500 5.500q1.500 2.500 0 5M11.500 4q2.500 4 0 8M13.500 2.500q3.500 5.500 0 11" fill="none" stroke="#7b7b7b" />
  </svg>
);

const FlagIcon = () => (
  <svg width="17" height="16" viewBox="0 0 17 16">
    <path d="M2.500 1v14" stroke="#555" strokeWidth="1.300" />
    <path d="M3 2h6v1.500h6.500l-2 3 2 3H9.500V8H3z" fill="#fff" stroke="#666" strokeWidth=".8" />
  </svg>
);

const DesktopIcon = () => (
  <svg width="16" height="14" viewBox="0 0 16 14">
    <path d="M.5 1h15v10H.5z" fill="#2c66bd" stroke="#6a7b93" />
    <path d="M1 1.500h14L1 8z" fill="#6ba0e2" />
    <path d="M3 12.500h10" stroke="#c8ccd2" />
  </svg>
);

const Watermark = styled.div`
  position: absolute;
  left: 1034px;
  top: 604px;
  filter: drop-shadow(0 0 1.500px rgba(80, 80, 80, .5));
  opacity: .65;
`;

const App = () => (
  <Desktop>
    <GlobalStyle />
    <Browser
      x={0} y={0} w={1280} h={692} maximized
      title="Watch free USA TV Channels live streaming online Dish Tv outside USA - Windows Internet Explorer"
      titleTrack={-0.01}
      path="/USA--TV.php"
      pathTrack={0.12}
      tab="Watch free"
      tabWidth={300}
      status="http://fomny.com/Video/USA/04/Play-Boy/Play-Boy.php"
      statusTrack={0.05}
      vThumb={[41, 90]} hThumb={[0, 1218]}
    >
      <ChannelPage />
    </Browser>
    <Browser
      x={54} y={54} w={800} h={600}
      title="Playboy Tv Channel Online live Streaming | Satellite dish Tv - Windows Internet Explorer"
      titleTrack={0.04}
      path=""
      tab="Playboy"
      tabWidth={298}
      status="Done"
      vThumb={[17, 116]} hThumb={[0, 448]}
    >
      <PlayboyPage />
    </Browser>
    <Browser
      x={76} y={76} w={800} h={600} active
      title="Live TV fomny.com بث مباشـر - Windows Internet Explorer"
      titleTrack={0.05}
      path="/Menu2/Pop3/Pop2-iframe-progtv-01.php?"
      pathTrack={-0.02}
      tab="Live TV fomny.com بث مباشـر"
      tabWidth={298}
      status="Done"
      vThumb={[17, 116]} hThumb={[0, 448]}
    >
      <LiveTvPage />
    </Browser>
    <Taskbar>
      <StartButton><StartFlag />Start</StartButton>
      <RunningTask><IeIcon size={17} /></RunningTask>
      <TaskIcon $ml={10}><Folder /></TaskIcon>
      <TaskIcon $ml={18}><MediaPlayer /></TaskIcon>
      <TaskIcon $ml={18}><ChromeIcon /></TaskIcon>
      <TaskIcon $ml={17}><OperaIcon /></TaskIcon>
      <Tray>
        <Chevrons />
        <TaskIcon $ml={9}><NetworkIcon /></TaskIcon>
        <TaskIcon $ml={8}><SpeakerIcon /></TaskIcon>
        <TaskIcon $ml={8}><FlagIcon /></TaskIcon>
        <Clock>11:18 AM</Clock>
        <DesktopIcon />
      </Tray>
    </Taskbar>
    <Watermark>
      <svg width="202" height="70" viewBox="0 0 202 70">
        <text x="5" y="54" fontFamily="Roboto" fontSize="49" fill="#fff" textLength="63" lengthAdjust="spacingAndGlyphs">ANY</text>
        <path d="M84 11l-4 1q-2 1-2 4v39M87 49V8l41 26" fill="none" stroke="#fff" strokeWidth="3.500" />
        <path d="M95 50V22l24 14-35 21M86 65l41-24" fill="none" stroke="#fff" strokeWidth="3" />
        <text x="134" y="54" fontFamily="Roboto" fontSize="49" fill="#fff" textLength="64" lengthAdjust="spacingAndGlyphs">RUN</text>
      </svg>
    </Watermark>
  </Desktop>
);

export default App;
